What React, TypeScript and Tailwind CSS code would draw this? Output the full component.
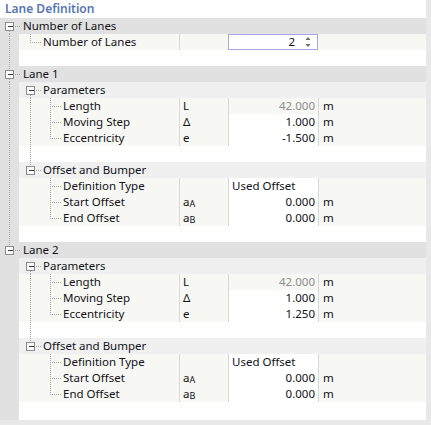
import type { ReactNode } from "react";

type Seg = [number, number, number, number];

type Row = {
  k: "g0" | "g1" | "leaf" | "num" | "blank";
  label?: string;
  sym?: ReactNode;
  val?: string;
  unit?: string;
  gray?: boolean;
  edit?: boolean;
  left?: boolean;
  box?: number;
  segs: Seg[];
};

const v = (x: number, y1: number, y2: number): Seg => [x + 0.5, y1, x + 0.5, y2];
const h = (y: number, x1: number, x2: number): Seg => [x1, y + 0.5, x2, y + 0.5];

const aF = v(9, 0, 16);
const bF = v(30, 0, 16);
const cTee = [v(50, 0, 16), h(8, 50, 61)];
const cEnd = [v(50, 0, 8), h(8, 50, 61)];

const sub = (c: string) => (
  <span>
    a<span className="text-[9px] align-[-1px]">{c}</span>
  </span>
);

function lane(n: number, ecc: string, hasNext: boolean): Row[] {
  const a = hasNext ? [aF] : [];
  return [
    { k: "g0", label: `Lane ${n}`, box: 9, segs: [v(9, 0, 4), ...(hasNext ? [v(9, 13, 16)] : []), h(8, 15, 21)] },
    { k: "g1", label: "Parameters", box: 30, segs: [...a, v(30, 13, 16), h(8, 36, 41)] },
    { k: "leaf", label: "Length", sym: "L", val: "42.000", unit: "m", gray: true, segs: [...a, bF, ...cTee] },
    { k: "leaf", label: "Moving Step", sym: "Δ", val: "1.000", unit: "m", edit: true, segs: [...a, bF, ...cTee] },
    { k: "leaf", label: "Eccentricity", sym: "e", val: ecc, unit: "m", edit: true, segs: [...a, bF, ...cEnd] },
    { k: "blank", segs: [...a, bF] },
    { k: "g1", label: "Offset and Bumper", box: 30, segs: [...a, v(30, 0, 4), h(8, 36, 41)] },
    { k: "leaf", label: "Definition Type", val: "Used Offset", left: true, edit: true, segs: [...a, ...cTee] },
    { k: "leaf", label: "Start Offset", sym: sub("A"), val: "0.000", unit: "m", edit: true, segs: [...a, ...cTee] },
    { k: "leaf", label: "End Offset", sym: sub("B"), val: "0.000", unit: "m", edit: true, segs: [...a, ...cEnd] },
  ];
}

const rows: Row[] = [
  { k: "g0", label: "Number of Lanes", box: 9, segs: [v(9, 13, 16), h(8, 15, 21)] },
  { k: "num", label: "Number of Lanes", segs: [aF, v(30, 0, 8), h(8, 30, 41)] },
  { k: "blank", segs: [aF] },
  ...lane(1, "-1.500", true),
  { k: "blank", segs: [aF] },
  ...lane(2, "1.250", false),
];

const indent = { g0: 23, g1: 43, leaf: 63, num: 43, blank: 63 };
const bg = { g0: "bg-[#e1e1e1]", g1: "bg-[#f0f0f0]", leaf: "bg-[#f7f7f3]", num: "bg-[#f7f7f3]", blank: "bg-white" };

function Tree({ r }: { r: Row }) {
  const w = indent[r.k];
  return (
    <svg width={w} height={16} className="block shrink-0">
      {r.k !== "g0" && <rect x={0} y={0} width={19} height={16} fill="#e1e1e1" />}
      {r.segs.map((s, i) => (
        <line
          key={i}
          x1={s[0]}
          y1={s[1]}
          x2={s[2]}
          y2={s[3]}
          stroke="#a4a4a4"
          strokeDasharray="1 1"
          shapeRendering="crispEdges"
        />
      ))}
      {r.box !== undefined && (
        <g shapeRendering="crispEdges">
          <rect x={r.box - 3.5} y={4.5} width={8} height={8} fill="#fafafa" stroke="#8c8c8c" />
          <line x1={r.box - 1} y1={8.5} x2={r.box + 4} y2={8.5} stroke="#3c3c3c" />
        </g>
      )}
    </svg>
  );
}

function Spinner() {
  return (
    <div className="flex h-4 w-[90px] items-center justify-end border border-[#a6a6e4] bg-white pr-[5px]">
      <span className="leading-none">2</span>
      <svg width={8} height={12} className="ml-[9px]">
        <path d="M4 1 L6.5 4 L1.5 4 Z" fill="#6a6a6a" />
        <path d="M4 11 L6.5 8 L1.5 8 Z" fill="#6a6a6a" />
      </svg>
    </div>
  );
}

function TreeRow({ r }: { r: Row }) {
  const leaf = r.k === "leaf" || r.k === "num";
  return (
    <div className={`flex h-4 w-[426px] items-center leading-4 ${bg[r.k]}`}>
      <div className="flex w-[179px] shrink-0 items-center">
        <Tree r={r} />
        {r.label && <span className="whitespace-nowrap">{r.label}</span>}
      </div>
      {leaf && (
        <>
          <div className="h-4 w-[49px] shrink-0 border-l border-[#d8d8d8] pl-[3px]">{r.sym}</div>
          {r.k === "num" ? (
            <Spinner />
          ) : (
            <div
              className={`h-4 w-[90px] shrink-0 border-l border-[#d8d8d8] ${r.edit ? "bg-white" : ""} ${
                r.left ? "pl-[3px] text-left" : "pr-[3px] text-right"
              } ${r.gray ? "text-[#8e8e8e]" : ""}`}
            >
              {r.val}
            </div>
          )}
          <div className={`h-4 flex-1 pl-[4px] ${r.k === "num" ? "" : "border-l border-[#d8d8d8]"}`}>{r.unit}</div>
        </>
      )}
    </div>
  );
}

export default function App() {
  return (
    <div
      className="flex h-[425px] w-[431px] flex-col bg-[#e8e8e8] text-[11.5px] text-[#121218]"
      style={{ fontFamily: '"Noto Sans", "Open Sans", sans-serif' }}
    >
      <div className="flex h-[420px] w-[426px] flex-col bg-white">
        <div className="flex h-[18px] items-center pl-[5px] text-[12px] font-semibold text-[#5676b0]">
          Lane Definition
        </div>
        {rows.map((r, i) => (
          <TreeRow key={i} r={r} />
        ))}
        <div className="flex flex-1">
          <div className="w-[19px] bg-[#e1e1e1]" />
        </div>
      </div>
    </div>
  );
}
